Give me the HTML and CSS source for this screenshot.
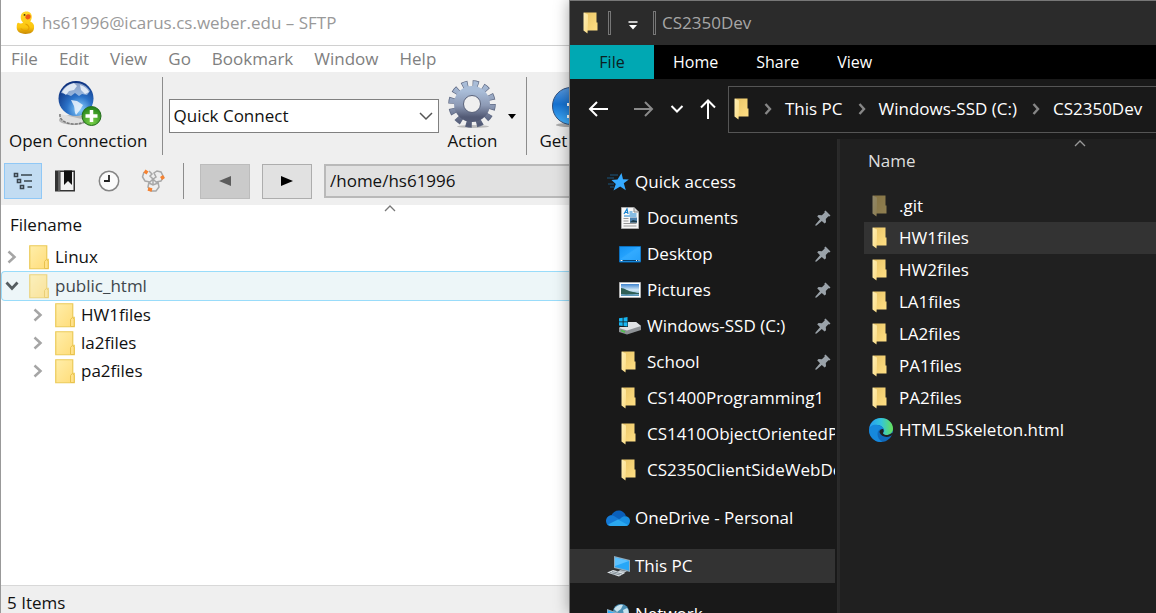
FILE: index.html
```html
<!DOCTYPE html>
<html lang="en">
<head>
<meta charset="utf-8">
<title>CS2350Dev</title>
<link rel="stylesheet" href="styles.css">
</head>
<body>
<svg class="sprite" width="0" height="0" aria-hidden="true">
  <defs>
    <linearGradient id="gFront" x1="0" y1="0" x2="1" y2="1"><stop offset="0" stop-color="#fff0b8"/><stop offset="1" stop-color="#fbdc84"/></linearGradient>
    <linearGradient id="gBack" x1="0" y1="0" x2="1" y2="1"><stop offset="0" stop-color="#e9c566"/><stop offset="1" stop-color="#ffdf85"/></linearGradient>
    <linearGradient id="gFolder" x1="0" y1="0" x2="1" y2="1"><stop offset="0" stop-color="#ffeeaa"/><stop offset="1" stop-color="#ffdc78"/></linearGradient>
    <radialGradient id="gGlobe" cx=".6" cy=".8" r=".8"><stop offset="0" stop-color="#8fd4ff"/><stop offset=".45" stop-color="#2b72c8"/><stop offset="1" stop-color="#0d2f7c"/></radialGradient>
    <radialGradient id="gPlus" cx=".5" cy=".8" r=".8"><stop offset="0" stop-color="#7bd24a"/><stop offset="1" stop-color="#1f7f16"/></radialGradient>
    <linearGradient id="gGear" x1="0" y1="0" x2="0" y2="1"><stop offset="0" stop-color="#a9bdd8"/><stop offset=".55" stop-color="#8d9ab5"/><stop offset="1" stop-color="#525a75"/></linearGradient>
    <linearGradient id="gInfo" x1="0" y1="0" x2="0" y2="1"><stop offset="0" stop-color="#5a9be0"/><stop offset=".45" stop-color="#1672d2"/><stop offset="1" stop-color="#45b4ff"/></linearGradient>
    <linearGradient id="gScreen" x1="0" y1="0" x2="1" y2="1"><stop offset="0" stop-color="#1592f2"/><stop offset=".5" stop-color="#27a5ff"/><stop offset="1" stop-color="#1193f5"/></linearGradient>
    <linearGradient id="gSky" x1="0" y1="0" x2="0" y2="1"><stop offset="0" stop-color="#3f84cf"/><stop offset=".5" stop-color="#d5ebf8"/><stop offset="1" stop-color="#4f90b5"/></linearGradient>
    <linearGradient id="gEdge" x1="0" y1="0" x2="1" y2="0"><stop offset="0" stop-color="#269cf0"/><stop offset=".5" stop-color="#33c5dc"/><stop offset="1" stop-color="#67e255"/></linearGradient>
    <linearGradient id="gDuck" x1="0" y1="0" x2="0" y2="1"><stop offset="0" stop-color="#ffd92e"/><stop offset=".7" stop-color="#fcc60e"/><stop offset="1" stop-color="#c98a05"/></linearGradient>
    <symbol id="folder" viewBox="0 0 15 22">
      <path d="M1 .5h12.500v10h1v8H1z" fill="url(#gBack)"/>
      <path d="M.5.500l4.500 2v8.500l-.5 10.500-4-3z" fill="url(#gFront)"/>
    </symbol>
    <symbol id="folder-light" viewBox="0 0 20 25">
      <path d="M.75.75h17v13.500h1.500v9.500H.75z" fill="url(#gFolder)" stroke="#ecca58" stroke-width="1.200"/>
      <path d="M15.500 23.500v-7l2-2.200 1.700 2.200v7z" fill="#ffe189" stroke="#e9c24c"/>
    </symbol>
    <symbol id="pin" viewBox="0 0 16 16">
      <path d="M10.500.5l5 5-1.200 1-.9-.2-2.600 2.700.2 3.200-1.400 1.400L6.800 11l-5.200 4.600-1.300.2.200-1.300L5 9.200 2.200 6.200l1.400-1.300 3.300.3 2.800-2.700-.3-1z" fill="#9aa2a9"/>
    </symbol>
    <symbol id="crumb" viewBox="0 0 8 12"><path d="M1.500 1l4.500 5-4.500 5" fill="none" stroke="#868686" stroke-width="2.400"/></symbol>
    <symbol id="expand" viewBox="0 0 10 14"><path d="M1.500 1.500L7.500 7l-6 5.500" fill="none" stroke="#a5a5a5" stroke-width="2.500"/></symbol>
    <symbol id="sort" viewBox="0 0 12 7"><path d="M1 6l5-5 5 5" fill="none" stroke="currentColor" stroke-width="1.300"/></symbol>
  </defs>
</svg>
<div class="desktop">

  <section class="ftp" aria-label="SFTP browser">
    <header class="ftp-title">
      <svg class="duck" viewBox="0 0 20 25" aria-hidden="true">
        <path d="M5 7C5 3 7.500.8 11 .8c4 0 6 2.800 5.600 6.300-.1 2-1 3.400-1.600 4.400 3 1 4.500 3.500 4 7-.5 4-3.500 6-9 6C4 24.500 0 22 .8 16c.3-2.500.7-3.500 1.700-3.200C4.500 14 6.500 13.500 7.500 12.500 5.800 11 5 9.500 5 7z" fill="url(#gDuck)"/>
        <path d="M10 14c3 1 5 4 3 6s-6 1-8-1" fill="none" stroke="#e5a000" stroke-width="1.200"/>
        <circle cx="9" cy="4.500" r="1" fill="#4b3500"/><path d="M10.500 5c2-2 5-1 5 1s-2 4-4 3-2-2-1-4z" fill="#ee5a16"/>
      </svg>
      <span>hs61996@icarus.cs.weber.edu – SFTP</span>
    </header>
    <nav class="menu">
      <button>File</button><button>Edit</button><button>View</button><button>Go</button><button>Bookmark</button><button>Window</button><button>Help</button>
    </nav>
    <div class="tools">
      <button class="tool">
        <svg class="tool-icon" viewBox="0 0 48 48" aria-hidden="true">
          <ellipse cx="20" cy="40" rx="15" ry="5" fill="#b9b9b9"/><path d="M6 34c-1 6 6 10 14 10 5 0 10-1 12-4" fill="#e0e0e0" stroke="#777" stroke-width="1.500" stroke-dasharray="3 1"/>
          <circle cx="22" cy="18.500" r="17.500" fill="url(#gGlobe)"/>
          <path d="M7 13c3-7 9-10 15-10 6 0 11 3 14 8l-3 4-5-1-3 2-4-3-4 3-5-2z" fill="#dfe8f2" opacity=".6"/>
          <path d="M8 12c3-5 7-8 12-9l3 3-3 4-5 1-3 4zM26 5c4 1 7 3 9 7l-4 2-4-4zM17 20l6 1 6 4-3 5-4 5c-2-3-1-6-2-9z" fill="#eef5fb" opacity=".85"/>
          <circle cx="37.500" cy="36" r="9.500" fill="url(#gPlus)" stroke="#236d1c"/>
          <path d="M37.500 30v12M31.500 36h12" stroke="#fff" stroke-width="3.500"/>
        </svg>
        <span>Open Connection</span>
      </button>
      <span class="rule"></span>
      <label class="combo">
        <select class="combo-box" aria-label="Quick Connect"><option>Quick Connect</option></select>
        <svg class="combo-mark" viewBox="0 0 14 9" aria-hidden="true"><path d="M1 1l6 6 6-6" fill="none" stroke="#555" stroke-width="1.500"/></svg>
      </label>
      <button class="tool">
        <svg class="tool-icon" viewBox="0 0 48 48" aria-hidden="true">
          <ellipse cx="25" cy="46.500" rx="16" ry="1.500" fill="#bbb"/>
          <g fill="none" stroke="#5c6680" stroke-width="6" >
            <circle cx="24" cy="24" r="20" stroke-width="7.500" stroke-dasharray="5.800 4.672"/>
          </g>
          <circle cx="24" cy="24" r="20" fill="none" stroke="url(#gGear)" stroke-width="6" stroke-dasharray="4.600 5.872" stroke-dashoffset="-.6"/>
          <circle cx="24" cy="24" r="13" fill="none" stroke="url(#gGear)" stroke-width="10"/>
          <circle cx="24" cy="24" r="8.500" fill="#efefef" stroke="#59627a"/>
        </svg>
        <span>Action</span>
      </button>
      <svg class="drop" viewBox="0 0 8 5" aria-hidden="true"><path d="M0 0h8L4 5z"/></svg>
      <span class="rule"></span>
      <button class="tool">
        <svg class="tool-icon" viewBox="0 0 48 48" aria-hidden="true">
          <ellipse cx="24" cy="45" rx="15" ry="2" fill="#aaa"/>
          <circle cx="24" cy="26" r="18.500" fill="url(#gInfo)" stroke="#31507c"/>
          <circle cx="26" cy="17" r="3" fill="#fff"/><path d="M20 23h8v12h4v3H20v-3h3v-9h-3z" fill="#fff"/>
        </svg>
        <span>Get Info</span>
      </button>
    </div>
    <div class="bar">
      <button class="view on" aria-label="Outline">
        <svg width="20" height="18" viewBox="0 0 20 18" fill="none" stroke="#3a454e" stroke-width="1.600"><path d="M1.500 1.500h3v3h-3zM4.500 7.500h3v3h-3zM7.500 13.500h3v3h-3z"/><path d="M8 3h11M11 9h8M14.500 15H19"/></svg>
      </button>
      <button class="view" aria-label="Bookmarks">
        <svg width="20" height="22" viewBox="0 0 20 22"><path d="M0 .5h20v21H0z" fill="#333"/><path d="M5.500 2h13v18h-13z" fill="#f2f2f2"/><path d="M3.500 0h1v22h-1z" fill="#888"/><path d="M9 .5h8V15l-4-4-4 4z" fill="#111"/></svg>
      </button>
      <button class="view" aria-label="History">
        <svg width="22" height="22" viewBox="0 0 22 22"><circle cx="11" cy="11" r="9.700" fill="#fbfbfb" stroke="#858585" stroke-width="1.500"/><path d="M11 5v6H6" fill="none" stroke="#222" stroke-width="1.800"/></svg>
      </button>
      <button class="view" aria-label="Bonjour">
        <svg width="24" height="24" viewBox="0 0 24 24" fill="none" stroke="#a8a8a8" stroke-width="1.500"><path d="M3 3L1.500 8 4 12l5 1 3-3 3 3 5-1 2.500-4L20 3l-4-1-3 2 2 4-3 2-3-3 2-2-3-3M8 13l-1 5 3 4h5l3-4-1-5M8 14l4 2 5-2M12 10v6"/><path d="M3.500 2l3 2M20.500 7l2 3M7 20l4 1" stroke="#f58231" stroke-width="3.500"/></svg>
      </button>
      <span class="rule short"></span>
      <button class="step off" aria-label="Back"><svg width="12" height="12" viewBox="0 0 12 12"><path d="M12 1v10L0 6z" fill="#5c5c5c"/></svg></button>
      <button class="step" aria-label="Forward"><svg width="12" height="12" viewBox="0 0 12 12"><path d="M0 1v10l12-5z"/></svg></button>
      <select class="path" aria-label="Path"><option>/home/hs61996</option></select>
    </div>
    <div class="listing">
      <svg class="ftp-sort" aria-hidden="true"><use href="#sort"/></svg>
      <div class="list-head">Filename</div>
      <ul class="tree">
        <li class="node"><svg class="twist" aria-hidden="true"><use href="#expand"/></svg><svg class="leaf" aria-hidden="true"><use href="#folder-light"/></svg>Linux</li>
        <li class="node picked"><svg class="twist open" viewBox="0 0 14 10" aria-hidden="true"><path d="M1.500 1.500L7 7.500l5.500-6" fill="none" stroke="#555d60" stroke-width="2.800"/></svg><svg class="leaf" aria-hidden="true"><use href="#folder-light"/></svg>public_html</li>
        <li class="node child"><svg class="twist" aria-hidden="true"><use href="#expand"/></svg><svg class="leaf" aria-hidden="true"><use href="#folder-light"/></svg>HW1files</li>
        <li class="node child"><svg class="twist" aria-hidden="true"><use href="#expand"/></svg><svg class="leaf" aria-hidden="true"><use href="#folder-light"/></svg>la2files</li>
        <li class="node child"><svg class="twist" aria-hidden="true"><use href="#expand"/></svg><svg class="leaf" aria-hidden="true"><use href="#folder-light"/></svg>pa2files</li>
      </ul>
    </div>
    <footer class="status">5 Items</footer>
  </section>

  <section class="explorer" aria-label="File explorer">
    <header class="ex-title">
      <svg class="folder" aria-hidden="true"><use href="#folder"/></svg>
      <span class="grip"></span>
      <svg class="quick" width="10" height="9" viewBox="0 0 10 9" aria-hidden="true"><path d="M.5 1h9" stroke="#fff" stroke-width="1.500"/><path d="M1 4h8L5 8.500z" fill="#fff"/></svg>
      <span class="grip"></span>
      <span class="ex-name">CS2350Dev</span>
    </header>
    <nav class="tabs">
      <button class="tab file">File</button><button class="tab">Home</button><button class="tab">Share</button><button class="tab">View</button>
    </nav>
    <div class="nav">
      <button class="go" aria-label="Back"><svg width="20" height="16" viewBox="0 0 20 16"><path d="M9 1L2 8l7 7M2 8h18" fill="none" stroke="#fff" stroke-width="2"/></svg></button>
      <button class="go" aria-label="Forward"><svg width="20" height="16" viewBox="0 0 20 16"><path d="M11 1l7 7-7 7M18 8H0" fill="none" stroke="#8a8a8a" stroke-width="2"/></svg></button>
      <button class="go" aria-label="Recent locations"><svg width="14" height="10" viewBox="0 0 14 10"><path d="M1.500 2L7 7.500 12.500 2" fill="none" stroke="#fff" stroke-width="2"/></svg></button>
      <button class="go" aria-label="Up"><svg width="16" height="20" viewBox="0 0 16 20"><path d="M1 8.500L8 1.500l7 7M8 2v18" fill="none" stroke="#fff" stroke-width="2"/></svg></button>
      <div class="address">
        <svg class="folder" aria-hidden="true"><use href="#folder"/></svg>
        <svg class="crumb" aria-hidden="true"><use href="#crumb"/></svg><a href="#">This PC</a>
        <svg class="crumb" aria-hidden="true"><use href="#crumb"/></svg><a href="#">Windows-SSD (C:)</a>
        <svg class="crumb" aria-hidden="true"><use href="#crumb"/></svg><a href="#">CS2350Dev</a>
      </div>
    </div>
    <div class="panes">
      <aside class="side">
        <a class="place root" href="#"><span class="ico"><svg width="22" height="18" viewBox="0 0 22 18" aria-hidden="true"><path d="M14.500 0l1.500 6.200 5.800.3-5 3.700 2 7-5.600-3.700-6.700 4 2.300-6.400-4.300-4 6-.5z" fill="#35aaff"/><path d="M3 2h8M0 5h7M1 11h6M3 14h4" stroke="#1d71aa" opacity=".7"/></svg></span>Quick access</a>
        <a class="place" href="#"><span class="ico"><svg width="18" height="22" viewBox="0 0 18 22" aria-hidden="true"><path d="M.5.500h12.500l4.500 4.500v16.500H.5z" fill="#f8f8f8" stroke="#aaa"/><path d="M13 .5v4.500h4.500" fill="#ddd" stroke="#888"/><path d="M3 7l3-5 1 5M4 5.500h3M8.500 5h3M8.500 7h7M3 9h12.500" stroke="#1682cf" stroke-width="1.200" fill="none"/><path d="M2.500 11.500h5M2.500 14h5M2.500 16.500h13M2.500 19h13" stroke="#999"/><path d="M9 10.500h7v5H9z" fill="#4a7fae"/><path d="M9 15l3-2 4 1v1.500H9z" fill="#1a3c4c"/></svg></span><span class="label">Documents</span><svg class="pin" aria-hidden="true"><use href="#pin"/></svg></a>
        <a class="place" href="#"><span class="ico"><svg width="22" height="17" viewBox="0 0 22 17" aria-hidden="true"><path d="M.5.500h21v15.500H.5z" fill="url(#gScreen)" stroke="#0c70be"/><path d="M1 13l18-12h2.500v14z" fill="#49b5ff" opacity=".35"/><path d="M1 14.500h20" stroke="#073f6b"/><path d="M1.500 14.500h2M17 14.500h1M19.500 14.500h1" stroke="#fff"/></svg></span><span class="label">Desktop</span><svg class="pin" aria-hidden="true"><use href="#pin"/></svg></a>
        <a class="place" href="#"><span class="ico"><svg width="22" height="16" viewBox="0 0 22 16" aria-hidden="true"><path d="M.5.500h21v15H.5z" fill="#fff" stroke="#b0b0b0"/><path d="M2 2h18v12H2z" fill="url(#gSky)"/><path d="M2 6c4 0 6 3 12 4 3 .5 4 1 6 1v1c-8 0-12 1-18 0z" fill="#2f5f55"/></svg></span><span class="label">Pictures</span><svg class="pin" aria-hidden="true"><use href="#pin"/></svg></a>
        <a class="place" href="#"><span class="ico"><svg width="22" height="18" viewBox="0 0 22 18" aria-hidden="true"><path d="M0 11l8-6h9l5 4v4l-14 4.500L0 15z" fill="#8e9296"/><path d="M0 11l8-6h9l5 4-14 4.500z" fill="#dfe1e3"/><path d="M2 13.500l4 1.500" stroke="#4ec04a" stroke-width="1.500"/><path d="M0 0h9v10H0z" fill="#191919"/><path d="M0 1.300l3.700-.5v3.700H0zM4.500.7L8.500 0v4.500h-4zM0 5.300h3.700V9L0 8.500zM4.500 5.300h4v4.200l-4-.5z" fill="#16b6f2"/></svg></span><span class="label">Windows-SSD (C:)</span><svg class="pin" aria-hidden="true"><use href="#pin"/></svg></a>
        <a class="place" href="#"><span class="ico"><svg class="folder" aria-hidden="true"><use href="#folder"/></svg></span><span class="label">School</span><svg class="pin" aria-hidden="true"><use href="#pin"/></svg></a>
        <a class="place" href="#"><span class="ico"><svg class="folder" aria-hidden="true"><use href="#folder"/></svg></span>CS1400Programming1</a>
        <a class="place" href="#"><span class="ico"><svg class="folder" aria-hidden="true"><use href="#folder"/></svg></span>CS1410ObjectOrientedPr</a>
        <a class="place" href="#"><span class="ico"><svg class="folder" aria-hidden="true"><use href="#folder"/></svg></span>CS2350ClientSideWebDev</a>
        <a class="place root apart" href="#"><span class="ico"><svg width="24" height="16" viewBox="0 0 24 16" aria-hidden="true"><path d="M5 6C7 1 13-1 17 2c2 1.300 2.500 3 3 4l-8 4z" fill="#0a5fba"/><path d="M0 11c0-4 4-7 8-5l8 5-12 5c-2 0-4-2-4-5z" fill="#1479d5"/><path d="M15 8c3-3 9-2 9 3 0 3-2 5-4 5l-8-6z" fill="#188fe2"/><path d="M2 14.500l10-5 10 5.500c-1 .7-2 1-3 1H5c-1 0-2-.7-3-1.500z" fill="#2ba8ef"/></svg></span>OneDrive - Personal</a>
        <a class="place root apart current" href="#"><span class="ico"><svg width="23" height="21" viewBox="0 0 23 21" aria-hidden="true"><path d="M7 0l16 4v12L7 12z" fill="#8eabbe"/><path d="M8 1.500l14 3.500v9.500L8 11z" fill="#27a7f8"/><path d="M8 1.500l14 3.500L8 10z" fill="#5dc2ff"/><path d="M13 14l7 1-3 2-6-1z" fill="#b9c2c9"/><path d="M0 16.500l6-2.500 12 3-6 3.500z" fill="#dce2e6"/><path d="M3 16.500l10 2.500M5 15.500l10 2.500M6 19l5-4" stroke="#87939b"/></svg></span>This PC</a>
        <a class="place root apart" href="#"><span class="ico"><svg width="23" height="21" viewBox="0 0 23 21" aria-hidden="true"><circle cx="14" cy="8" r="8" fill="#4a8fb4"/><path d="M7 5c2-3 6-5 9-4l-2 4-4 3zM16 6l4-2c2 2 2 5 1 8l-4-1z" fill="#c9e3ee"/><path d="M0 5l12 4v10L0 15z" fill="#8eabbe"/><path d="M1 6.500l10 3.500v7L1 14z" fill="#35b4ff"/><path d="M2 18l6-1 8 3-6 1z" fill="#dce2e6"/></svg></span>Network</a>
      </aside>
      <main class="files">
        <svg class="ex-sort" aria-hidden="true"><use href="#sort"/></svg>
        <div class="files-head">Name</div>
        <ul class="file-list">
          <li class="entry"><span class="mark"><svg class="folder dim" aria-hidden="true"><use href="#folder"/></svg></span>.git</li>
          <li class="entry hover"><span class="mark"><svg class="folder" aria-hidden="true"><use href="#folder"/></svg></span>HW1files</li>
          <li class="entry"><span class="mark"><svg class="folder" aria-hidden="true"><use href="#folder"/></svg></span>HW2files</li>
          <li class="entry"><span class="mark"><svg class="folder" aria-hidden="true"><use href="#folder"/></svg></span>LA1files</li>
          <li class="entry"><span class="mark"><svg class="folder" aria-hidden="true"><use href="#folder"/></svg></span>LA2files</li>
          <li class="entry"><span class="mark"><svg class="folder" aria-hidden="true"><use href="#folder"/></svg></span>PA1files</li>
          <li class="entry"><span class="mark"><svg class="folder" aria-hidden="true"><use href="#folder"/></svg></span>PA2files</li>
          <li class="entry"><span class="mark"><svg width="24" height="24" viewBox="0 0 24 24" aria-hidden="true">
            <circle cx="12" cy="12" r="12" fill="#1069bb"/>
            <path d="M.3 10C1.500 4 6 0 12 0c7 0 12 5 12 10.500 0 4-3 6.500-6.500 6.500-2.500 0-4-1-3.500-2 1-1 1.500-2 1-3.500C14 9 11.500 7 8.500 7 5 7 2 8 .3 10z" fill="url(#gEdge)"/>
            <path d="M0 12c.5-4 4.500-6 8.500-5 3 .5 5 2 6 4-3-1-6 1-6 5 0 3.500 2 6.500 5 7.800C6 25 0 19 0 12z" fill="#1688dc"/>
            <path d="M14 11c1 2 .5 3-.1 4 .3 1.700 3 2.500 5.600 1.800 1.300-.3 2.500-1 3.500-1.700l1 .2-.6 1.700-2 1c-4 2-9.500.5-10.800-3.500-.5-1.800 1.400-3.400 3.400-3.500z" fill="#202020"/>
          </svg></span>HTML5Skeleton.html</li>
        </ul>
      </main>
    </div>
  </section>
</div>
</body>
</html>
```
FILE: styles.css
```css
* { box-sizing: border-box; }
body {
  margin: 0;
  font-family: "Open Sans", "Noto Sans", sans-serif;
  font-size: 17px;
  line-height: 24px;
  overflow: hidden;
}
button, select {
  font: inherit;
  color: inherit;
  background: none;
  border: 0;
  border-radius: 0;
  margin: 0;
  padding: 0;
}
a { color: inherit; text-decoration: none; }
ul { list-style: none; margin: 0; padding: 0; }
svg { display: block; flex: none; }
.sprite { position: absolute; }
.desktop {
  display: grid;
  grid-template-columns: minmax(0, 569fr) minmax(0, 587fr);
  height: 100vh;
}

/* SFTP window */
.ftp {
  display: flex;
  flex-direction: column;
  min-height: 0;
  overflow: hidden;
  white-space: nowrap;
  background: #fff;
  color: #111;
  border-left: 1px solid #999;
}
.ftp-title {
  display: flex;
  align-items: center;
  gap: 7px;
  height: 46px;
  flex: none;
  padding-left: 15px;
  color: #999;
  border-bottom: 1px solid #d0d0d0;
}
.duck { width: 19px; height: 25px; }
.menu {
  display: flex;
  gap: 21px;
  height: 26px;
  flex: none;
  padding-left: 10px;
  color: #808080;
}
.tools {
  display: flex;
  align-items: center;
  height: 88px;
  flex: none;
  padding-left: 8px;
  background: #efefef;
}
.tool {
  display: flex;
  flex-direction: column;
  align-items: center;
  flex: none;
}
.tool-icon { width: 48px; height: 48px; margin-bottom: 1px; }
.rule { flex: none; width: 1px; height: 78px; margin: 0 12px; background: #8c8c8c; }
.tool + .rule { margin: 0 6px 0 14px; }
.rule.short { height: 36px; margin: 0 16px 0 5px; }
.combo { position: relative; flex: none; width: 270px; margin-right: 9px; }
.combo-box, .path {
  appearance: none;
  width: 100%;
  height: 34px;
  padding: 0 4px;
  border: 1px solid #808080;
  background: #fff;
}
.combo-mark { position: absolute; right: 6px; top: 13px; width: 14px; height: 9px; }
.drop { width: 8px; height: 5px; margin-left: 11px; }
.tools .drop + .rule { margin-left: 10px; }
.bar {
  display: flex;
  align-items: center;
  height: 45px;
  flex: none;
  padding: 0 0 3px 3px;
  background: #efefef;
}
.view {
  display: flex;
  align-items: center;
  justify-content: center;
  flex: none;
  width: 38px;
  height: 36px;
  margin-right: 6px;
  border: 1px solid transparent;
}
.view.on { margin-right: 4px; background: #c2dcf2; border-color: #90c8f6; }
.step {
  display: flex;
  align-items: center;
  justify-content: center;
  flex: none;
  width: 50px;
  height: 35px;
  margin-right: 12px;
  border: 1px solid #adadad;
  background: #e1e1e1;
}
.step.off { background: #cacaca; border-color: #bcbcbc; }
.path { flex: 1; border: 2px solid #b9b9b9; border-right: 0; background: #e1e1e1; }
.listing { position: relative; flex: 1; min-height: 0; }
.ftp-sort { position: absolute; left: 67.5%; top: 0; width: 12px; height: 7px; color: #777; }
.list-head { height: 38px; padding: 8px 9px 0; }
.node {
  display: flex;
  align-items: center;
  height: 28px;
  padding-left: 6px;
}
.node.child { padding-left: 32px; }
.node.picked {
  height: 30px;
  padding-left: 5px;
  color: #3f474c;
  background: #edf6f8;
  border: 1px solid #99dcfa;
  border-width: 1px 0 1px 1px;
  border-radius: 4px 0 0 4px;
}
.picked .leaf { opacity: .75; }
.twist { width: 10px; height: 14px; margin-right: 12px; }
.twist.open { width: 14px; height: 10px; margin: 0 10px 0 -2px; }
.leaf { width: 20px; height: 25px; margin-right: 6px; }
.status {
  flex: none;
  height: 28px;
  padding: 5px 6px;
  background: #efefef;
  border-top: 1px solid #d8d8d8;
}

/* Explorer window */
.explorer {
  position: relative;
  display: flex;
  flex-direction: column;
  min-height: 0;
  white-space: nowrap;
  color: #fff;
  background: #191919;
  border: 1px solid #777;
  border-width: 1px 0 0 1px;
  box-shadow: 0 0 14px rgba(0, 0, 0, .35);
}
.folder { width: 15px; height: 22px; }
.ex-title {
  display: flex;
  align-items: center;
  height: 44px;
  flex: none;
  padding-left: 13px;
  background: #2b2b2b;
  color: #a6a6a6;
}
.grip { width: 3px; height: 24px; margin-left: 10px; border: 1px solid #777; }
.quick { margin: 4px 5px 0 17px; }
.ex-name { margin-left: 6px; }
.tabs {
  display: flex;
  height: 34px;
  flex: none;
  background: #000;
  font-size: 16px;
}
.tab { padding: 0 19px; }
.tab.file { width: 84px; background: #00a8b3; color: #0b2022; }
.nav {
  display: flex;
  align-items: center;
  height: 60px;
  flex: none;
  padding-left: 18px;
}
.go { flex: none; margin-right: 16px; }
.go:first-child { margin-right: 26px; }
.go:nth-child(4) { margin-right: 12px; }
.address {
  display: flex;
  align-items: center;
  gap: 13px;
  flex: 1;
  min-width: 0;
  height: 47px;
  padding-left: 5px;
  border: 1px solid #555;
  border-right: 0;
  overflow: hidden;
}
.crumb { width: 8px; height: 12px; margin-left: 2px; }
.panes {
  display: grid;
  grid-template-columns: minmax(0, 268fr) minmax(0, 318fr);
  flex: 1;
  min-height: 0;
}
.side {
  padding-top: 25px;
  padding-right: 2px;
  overflow: hidden;
  border-right: 1px solid #2b2b2b;
}
.place {
  display: flex;
  align-items: center;
  gap: 6px;
  height: 36px;
  padding-left: 49px;
  overflow: hidden;
}
.place.root { padding-left: 37px; }
.place.apart { height: 34px; margin-top: 14px; }
.place:not(.apart) + .apart { margin-top: 13px; }
.place.current { background: #333; }
.ico { display: flex; justify-content: center; flex: none; width: 22px; }
.ico .folder { margin-right: 3px; }
.label { flex: 1; }
.pin { width: 16px; height: 16px; margin-right: 4px; }
.files { position: relative; min-width: 0; overflow: hidden; background: #202020; border-left: 2px solid #292929; }
.ex-sort { position: absolute; left: 74%; top: 1px; width: 12px; height: 7px; color: #999; }
.files-head { height: 51px; padding: 10px 28px 0; color: #dedede; }
.file-list { padding-left: 24px; }
.entry {
  display: flex;
  align-items: center;
  gap: 6px;
  height: 32px;
  padding-left: 5px;
}
.entry.hover { background: #333; }
.mark { display: flex; justify-content: center; width: 24px; }
.mark .folder { margin-right: 3px; }
.dim { opacity: .5; }
```
